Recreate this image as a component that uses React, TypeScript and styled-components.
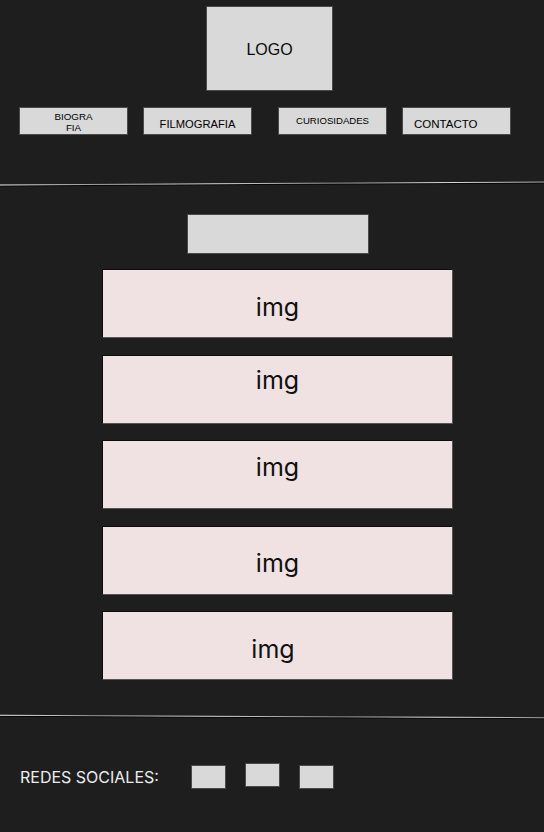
import React from "react";
import styled, { createGlobalStyle } from "styled-components";

const GlobalStyle = createGlobalStyle`
  html, body {
    margin: 0;
    padding: 0;
    background: #1e1e1e;
  }
`;

const Page = styled.div`
  width: 544px;
  height: 832px;
  background: #1e1e1e;
  display: flex;
  flex-direction: column;
  overflow: hidden;
`;

const Header = styled.header`
  display: flex;
  flex-direction: column;
  padding-top: 6px;
`;

const Logo = styled.div`
  box-sizing: border-box;
  width: 127px;
  height: 85px;
  margin-left: 206px;
  background: #d9d9d9;
  border: 1px solid #4a4a4a;
  display: flex;
  align-items: center;
  justify-content: center;
  padding-top: 3px;
  font-family: "Liberation Sans", Arial, sans-serif;
  font-size: 16px;
  color: #0a0a0a;
`;

const Nav = styled.nav`
  display: flex;
  margin-top: 16px;
  padding-left: 19px;
`;

const NavButton = styled.div<{
  $gap: number;
  $size: number;
  $line: number;
  $top: number;
  $left?: boolean;
  $pl?: number;
}>`
  box-sizing: border-box;
  width: 109px;
  height: 28px;
  margin-left: ${(p) => p.$gap}px;
  background: #d9d9d9;
  border: 1px solid #4a4a4a;
  padding-top: ${(p) => p.$top}px;
  padding-left: ${(p) => p.$pl ?? 0}px;
  text-align: ${(p) => (p.$left ? "left" : "center")};
  font-family: "Liberation Sans", Arial, sans-serif;
  font-size: ${(p) => p.$size}px;
  line-height: ${(p) => p.$line}px;
  color: #000;
  white-space: pre-line;
`;

const Divider = styled.div<{ $tilt: number }>`
  height: 1px;
  width: 560px;
  margin-left: -8px;
  background: linear-gradient(
    90deg,
    #f2f2f2 0%,
    #9c9c9c 18%,
    #d6d6d6 40%,
    #8c8c8c 62%,
    #e0e0e0 80%,
    #9a9a9a 100%
  );
  box-shadow: 0 1px 0 #050505;
  transform: rotate(${(p) => p.$tilt}deg);
`;

const Main = styled.main`
  display: flex;
  flex-direction: column;
  align-items: center;
  padding-left: 11px;
`;

const TitleBox = styled.div`
  box-sizing: border-box;
  width: 182px;
  height: 40px;
  margin-top: 30px;
  background: #d9d9d9;
  border: 1px solid #4a4a4a;
`;

const Gallery = styled.div`
  display: flex;
  flex-direction: column;
  gap: 16.5px;
  margin-top: 15px;
`;

const ImgBox = styled.div<{ $top: number; $dx?: number }>`
  box-sizing: border-box;
  width: 351px;
  height: 69px;
  background: #f0e2e2;
  border: 1px solid;
  border-color: #0c0c0c #555 #555 #0c0c0c;
  padding-top: ${(p) => p.$top}px;
  padding-right: ${(p) => p.$dx ?? 0}px;
  text-align: center;
  font-family: Inter, "Noto Sans", sans-serif;
  font-size: 25px;
  line-height: 26px;
  color: #111;
`;

const Footer = styled.footer`
  display: flex;
  flex-direction: column;
  margin-top: 36px;
`;

const SocialRow = styled.div`
  display: flex;
  align-items: center;
  padding-left: 20px;
  margin-top: 48px;
`;

const SocialLabel = styled.span`
  width: 171px;
  font-family: Inter, "Noto Sans", sans-serif;
  font-size: 16px;
  color: #ececec;
`;

const SocialIcon = styled.div<{ $raise?: boolean; $gap: number }>`
  box-sizing: border-box;
  width: 35px;
  height: 24px;
  margin-left: ${(p) => p.$gap}px;
  background: #d9d9d9;
  border: 1px solid #4a4a4a;
  transform: translateY(${(p) => (p.$raise ? -2 : 0)}px);
`;

const gallery = [
  { top: 24 },
  { top: 11 },
  { top: 13 },
  { top: 23 },
  { top: 24, dx: 9 },
];

export default function App() {
  return (
    <Page>
      <GlobalStyle />
      <Header>
        <Logo>LOGO</Logo>
        <Nav>
          <NavButton $gap={0} $size={9.8} $line={11.7} $top={2.5}>
            {"BIOGRA\nFIA"}
          </NavButton>
          <NavButton $gap={15} $size={11.2} $line={13} $top={9.5}>
            FILMOGRAFIA
          </NavButton>
          <NavButton $gap={26} $size={9.6} $line={11} $top={6.5}>
            CURIOSIDADES
          </NavButton>
          <NavButton $gap={15} $size={11.5} $line={13} $top={9.8} $left $pl={11}>
            CONTACTO
          </NavButton>
        </Nav>
      </Header>
      <div style={{ marginTop: 48 }} />
      <Divider $tilt={-0.3} />
      <Main>
        <TitleBox />
        <Gallery>
          {gallery.map((g, i) => (
            <ImgBox key={i} $top={g.top} $dx={g.dx}>
              img
            </ImgBox>
          ))}
        </Gallery>
      </Main>
      <Footer>
        <Divider $tilt={0.25} />
        <SocialRow>
          <SocialLabel>REDES SOCIALES:</SocialLabel>
          <SocialIcon $gap={0} />
          <SocialIcon $gap={19} $raise />
          <SocialIcon $gap={19} />
        </SocialRow>
      </Footer>
    </Page>
  );
}
